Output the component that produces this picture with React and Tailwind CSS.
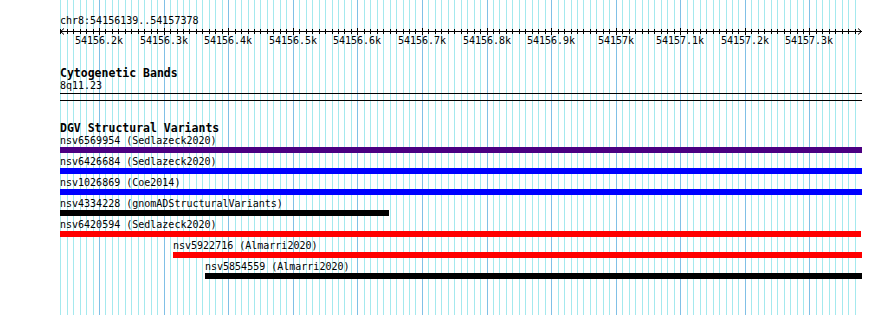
import React from "react";

const X0 = 99;
const S = 0.6459;
const xOf = (bp) => Math.round(X0 + (bp - 54156200) * S);

const minor = [];
for (let bp = 54156140; bp <= 54157370; bp += 10) minor.push(bp);

const labels = [];
for (let bp = 54156200; bp <= 54157300; bp += 100) {
  const k = bp / 1000;
  const txt = (Number.isInteger(k) ? String(k) : k.toFixed(1)) + "k";
  labels.push({ bp, txt });
}

const rows = [
  { label: "nsv6569954 (Sedlazeck2020)", color: "#4b0082", start: 60, end: 862 },
  { label: "nsv6426684 (Sedlazeck2020)", color: "#0000ff", start: 60, end: 862 },
  { label: "nsv1026869 (Coe2014)", color: "#0000ff", start: 60, end: 862 },
  { label: "nsv4334228 (gnomADStructuralVariants)", color: "#000000", start: 60, end: 389 },
  { label: "nsv6420594 (Sedlazeck2020)", color: "#ff0000", start: 60, end: 861 },
  { label: "nsv5922716 (Almarri2020)", color: "#ff0000", start: 173, end: 862 },
  { label: "nsv5854559 (Almarri2020)", color: "#000000", start: 205, end: 862 },
];

function Grid() {
  return (
    <svg
      className="absolute inset-0"
      width="890"
      height="315"
      shapeRendering="crispEdges"
    >
      {minor.map((bp) => {
        const major = bp % 100 === 0;
        const x = xOf(bp) + 0.5;
        return (
          <line
            key={bp}
            x1={x}
            x2={x}
            y1={0}
            y2={315}
            stroke={major ? "#80c0e6" : "#a4e9ee"}
            strokeWidth="1"
          />
        );
      })}
    </svg>
  );
}

function Ruler() {
  return (
    <div className="relative w-[802px]">
      <svg width="803" height="8" className="block" shapeRendering="crispEdges">
        <line x1="0" x2="802" y1="3.5" y2="3.5" stroke="#000" strokeWidth="1" />
        {minor.map((bp) => {
          const major = bp % 100 === 0;
          const x = xOf(bp) - 60 + 0.5;
          return (
            <line
              key={bp}
              x1={x}
              x2={x}
              y1={major ? 0 : 1}
              y2={major ? 7 : 6}
              stroke="#000"
              strokeWidth="1"
            />
          );
        })}
        <polyline points="4,0.5 0.5,3.5 4,6.5" fill="none" stroke="#000" strokeWidth="1" shapeRendering="auto" />
        <polyline points="798,0.5 801.5,3.5 798,6.5" fill="none" stroke="#000" strokeWidth="1" shapeRendering="auto" />
      </svg>
      <div className="relative h-[10px]">
        {labels.map((l) => (
          <span
            key={l.bp}
            className="absolute top-0 -translate-x-1/2 whitespace-nowrap text-[10px] leading-[10px] text-black"
            style={{ left: xOf(l.bp) - 60 }}
          >
            {l.txt}
          </span>
        ))}
      </div>
    </div>
  );
}

export default function App() {
  return (
    <div className="relative h-[315px] w-[890px] overflow-hidden bg-white font-['DejaVu_Sans_Mono',monospace] text-black">
      <Grid />
      <div className="relative flex w-[862px] flex-col pl-[60px]">
        <div className="mt-[14px] text-[10px] leading-[14px]">chr8:54156139..54157378</div>
        <Ruler />
        <div className="mt-[21px] text-[11.5px] font-bold leading-[12px]">Cytogenetic Bands</div>
        <div className="mt-[1px] text-[10px] leading-[12px]">8q11.23</div>
        <div className="mt-[1px] h-px w-[802px] bg-black" />
        <div className="mt-[6px] h-px w-[802px] bg-black" />
        <div className="mt-[21px] text-[11.5px] font-bold leading-[12px]">DGV Structural Variants</div>
        <div className="mt-[2px] flex flex-col">
          {rows.map((r) => (
            <div key={r.label} className="flex flex-col pb-[4px]" style={{ marginLeft: r.start - 60 }}>
              <div className="whitespace-nowrap text-[10px] leading-[10px]">{r.label}</div>
              <div
                className="mt-[1px] h-[6px]"
                style={{ width: r.end - r.start, backgroundColor: r.color }}
              />
            </div>
          ))}
        </div>
      </div>
    </div>
  );
}
